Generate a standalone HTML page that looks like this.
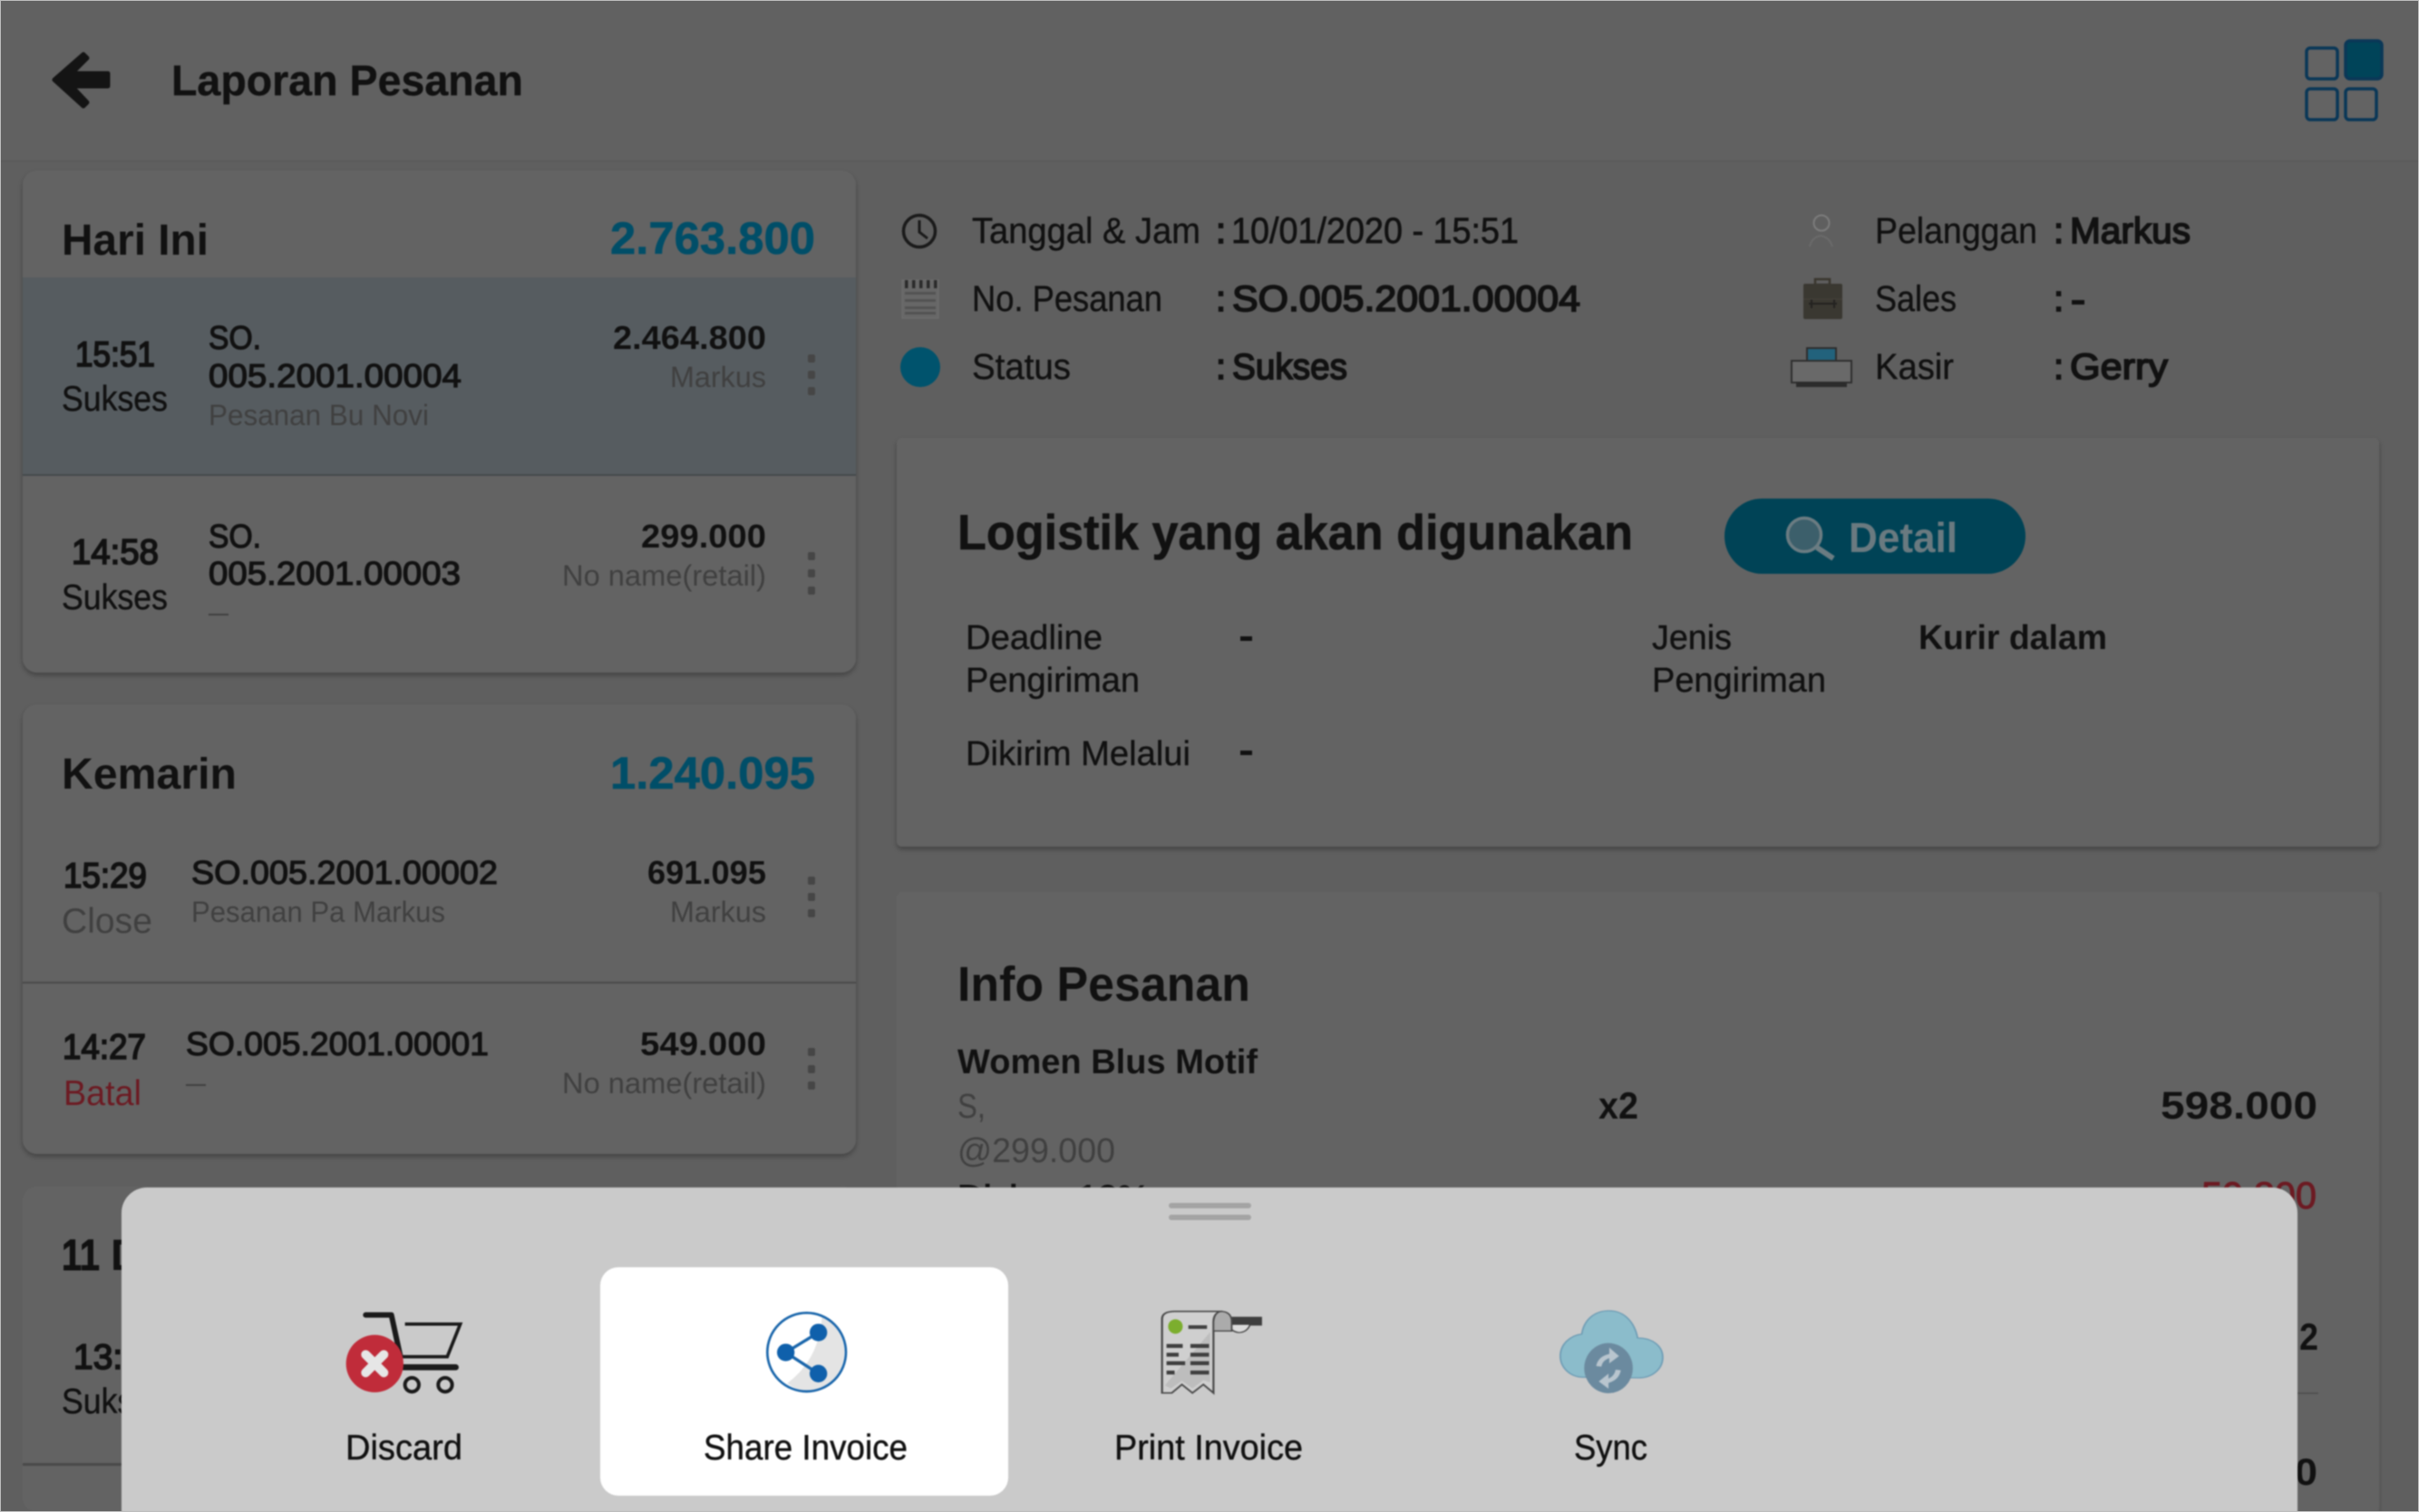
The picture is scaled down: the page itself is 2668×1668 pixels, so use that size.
<!DOCTYPE html>
<html lang="id">
<head>
<meta charset="utf-8">
<title>Laporan Pesanan</title>
<style>
html,body{margin:0;padding:0;background:#5f5f5f;width:2668px;height:1668px;overflow:hidden}
svg{display:block;position:absolute;left:0;top:0}
text{font-family:"Liberation Sans",sans-serif;fill:#111;white-space:pre}
.n{stroke:#111;stroke-width:.4px}
.m{stroke:#111;stroke-width:1.2px}
.h{stroke:#111;stroke-width:1.7px}
.b{font-weight:700}
.g{fill:#404040}
.tm{fill:#004e68;stroke:#004e68;stroke-width:.6px}
.r{fill:#6c1a22}
.soft{filter:blur(.7px)}
</style>
</head>
<body>
<svg width="2668" height="1668" viewBox="0 0 2668 1668" xmlns="http://www.w3.org/2000/svg">
<defs>
<filter id="sh" x="-5%" y="-5%" width="110%" height="110%"><feDropShadow dx="0" dy="3" stdDeviation="3" flood-color="#000" flood-opacity=".3"/></filter>
</defs>
<g class="soft">
<rect width="2668" height="1668" fill="#5f5f5f"/>
<rect width="2668" height="178" fill="#616161"/>
<rect y="177" width="2668" height="2" fill="#5a5a5a"/>

<!-- back arrow -->
<path d="M60 88 L92 60 L96 64 L79 81 H119 V95 L79 95 L96 113 L92 117 Z" fill="#141414" stroke="#141414" stroke-width="5" stroke-linejoin="round"/>
<text x="189" y="105" font-size="47" class="m b" textLength="388" lengthAdjust="spacingAndGlyphs" style="stroke-width:.4px">Laporan Pesanan</text>

<!-- grid icon -->
<g fill="none" stroke="#0a3757" stroke-width="3.5">
<rect x="2544" y="53" width="34" height="34" rx="4" fill="#636363"/>
<rect x="2544" y="98" width="34" height="34" rx="4" fill="#636363"/>
<rect x="2587" y="98" width="34" height="34" rx="4" fill="#636363"/>
<rect x="2587" y="45" width="40" height="42" rx="5" fill="#004459"/>
</g>

<!-- left card 1 -->
<rect x="25" y="188" width="919" height="554" rx="16" fill="#636363" filter="url(#sh)"/>
<text x="68" y="281" font-size="48" class="b" textLength="162" lengthAdjust="spacingAndGlyphs">Hari Ini</text>
<text x="673" y="280" font-size="50" class="tm b" textLength="226" lengthAdjust="spacingAndGlyphs">2.763.800</text>
<rect x="25" y="306" width="919" height="217" fill="#565c60"/>
<rect x="25" y="523" width="919" height="2" fill="#454a4c"/>

<text x="83" y="404" font-size="39" class="h" textLength="88" lengthAdjust="spacingAndGlyphs">15:51</text>
<text x="68" y="453" font-size="39" class="n" textLength="117" lengthAdjust="spacingAndGlyphs">Sukses</text>
<text x="230" y="385" font-size="36" class="m" textLength="58" lengthAdjust="spacingAndGlyphs">SO.</text>
<text x="230" y="427" font-size="36" class="m" textLength="279" lengthAdjust="spacingAndGlyphs">005.2001.00004</text>
<text x="230" y="469" font-size="32" class="g" textLength="243" lengthAdjust="spacingAndGlyphs">Pesanan Bu Novi</text>
<text x="676" y="385" font-size="36" class="b" textLength="169" lengthAdjust="spacingAndGlyphs">2.464.800</text>
<text x="739" y="427" font-size="32" class="g" textLength="106" lengthAdjust="spacingAndGlyphs">Markus</text>
<g fill="#464646"><rect x="891" y="391" width="8" height="9" rx="2"/><rect x="891" y="409" width="8" height="9" rx="2"/><rect x="891" y="427" width="8" height="9" rx="2"/></g>

<text x="79" y="622" font-size="39" class="h" textLength="96" lengthAdjust="spacingAndGlyphs">14:58</text>
<text x="68" y="672" font-size="39" class="n" textLength="117" lengthAdjust="spacingAndGlyphs">Sukses</text>
<text x="230" y="604" font-size="36" class="m" textLength="58" lengthAdjust="spacingAndGlyphs">SO.</text>
<text x="230" y="645" font-size="36" class="m" textLength="278" lengthAdjust="spacingAndGlyphs">005.2001.00003</text>
<rect x="230" y="677" width="22" height="2" fill="#404040"/>
<text x="707" y="604" font-size="36" class="b" textLength="138" lengthAdjust="spacingAndGlyphs">299.000</text>
<text x="620" y="646" font-size="32" class="g" textLength="225" lengthAdjust="spacingAndGlyphs">No name(retail)</text>
<g fill="#464646"><rect x="891" y="609" width="8" height="9" rx="2"/><rect x="891" y="628" width="8" height="9" rx="2"/><rect x="891" y="647" width="8" height="9" rx="2"/></g>

<!-- left card 2 -->
<rect x="25" y="777" width="919" height="496" rx="16" fill="#636363" filter="url(#sh)"/>
<text x="68" y="870" font-size="48" class="b" textLength="193" lengthAdjust="spacingAndGlyphs">Kemarin</text>
<text x="673" y="870" font-size="50" class="tm b" textLength="226" lengthAdjust="spacingAndGlyphs">1.240.095</text>
<text x="70" y="979" font-size="39" class="h" textLength="92" lengthAdjust="spacingAndGlyphs">15:29</text>
<text x="68" y="1029" font-size="39" class="g" textLength="100" lengthAdjust="spacingAndGlyphs">Close</text>
<text x="211" y="975" font-size="36" class="m" textLength="338" lengthAdjust="spacingAndGlyphs">SO.005.2001.00002</text>
<text x="211" y="1017" font-size="32" class="g" textLength="280" lengthAdjust="spacingAndGlyphs">Pesanan Pa Markus</text>
<text x="714" y="975" font-size="36" class="b" textLength="131" lengthAdjust="spacingAndGlyphs">691.095</text>
<text x="739" y="1017" font-size="32" class="g" textLength="106" lengthAdjust="spacingAndGlyphs">Markus</text>
<g fill="#464646"><rect x="891" y="967" width="8" height="9" rx="2"/><rect x="891" y="985" width="8" height="9" rx="2"/><rect x="891" y="1003" width="8" height="9" rx="2"/></g>
<rect x="25" y="1083" width="919" height="2" fill="#4a4a4a"/>
<text x="69" y="1168" font-size="39" class="h" textLength="92" lengthAdjust="spacingAndGlyphs">14:27</text>
<text x="70" y="1219" font-size="39" class="r" textLength="86" lengthAdjust="spacingAndGlyphs">Batal</text>
<text x="205" y="1164" font-size="36" class="m" textLength="334" lengthAdjust="spacingAndGlyphs">SO.005.2001.00001</text>
<rect x="205" y="1196" width="22" height="2" fill="#404040"/>
<text x="706" y="1164" font-size="36" class="b" textLength="139" lengthAdjust="spacingAndGlyphs">549.000</text>
<text x="620" y="1206" font-size="32" class="g" textLength="225" lengthAdjust="spacingAndGlyphs">No name(retail)</text>
<g fill="#464646"><rect x="891" y="1156" width="8" height="9" rx="2"/><rect x="891" y="1175" width="8" height="9" rx="2"/><rect x="891" y="1193" width="8" height="9" rx="2"/></g>

<!-- left card 3 -->
<rect x="25" y="1309" width="919" height="359" rx="16" fill="#636363"/>
<text x="68" y="1401" font-size="48" class="b" textLength="42" lengthAdjust="spacingAndGlyphs" style="stroke:#111;stroke-width:1px">11</text>
<text x="122" y="1401" font-size="48" class="b">Desember</text>
<text x="81" y="1510" font-size="39" class="h">13:05</text>
<text x="68" y="1559" font-size="39" class="n" textLength="117" lengthAdjust="spacingAndGlyphs">Sukses</text>
<rect x="25" y="1614" width="919" height="3" fill="#4a4a4a"/>

<!-- top info -->
<circle cx="1014" cy="255" r="17.5" fill="none" stroke="#1a1a1a" stroke-width="3.5"/>
<path d="M1014 243 V256 L1023 263" fill="none" stroke="#1a1a1a" stroke-width="3"/>
<text x="1072" y="268" font-size="40" class="n" textLength="252" lengthAdjust="spacingAndGlyphs">Tanggal &amp; Jam</text>
<text x="1341" y="268" font-size="40" class="h">:</text>
<text x="1358" y="268" font-size="40" class="n" style="stroke-width:.7px" textLength="317" lengthAdjust="spacingAndGlyphs">10/01/2020 - 15:51</text>

<rect x="995" y="309" width="40" height="42" fill="#676767" stroke="#6c6c6c" stroke-width="1.5"/>
<g fill="#2b2b2b"><rect x="998" y="309" width="3.5" height="9"/><rect x="1006" y="309" width="3.5" height="9"/><rect x="1014" y="309" width="3.5" height="9"/><rect x="1022" y="309" width="3.5" height="9"/><rect x="1030" y="309" width="3.5" height="9"/></g>
<g fill="#525252"><rect x="998" y="322" width="34" height="3"/><rect x="998" y="330" width="34" height="3"/><rect x="998" y="338" width="34" height="3"/><rect x="998" y="344" width="34" height="3"/></g>
<text x="1072" y="343" font-size="40" class="n" textLength="210" lengthAdjust="spacingAndGlyphs">No. Pesanan</text>
<text x="1341" y="343" font-size="40" class="h">:</text>
<text x="1359" y="343" font-size="40" class="h" textLength="384" lengthAdjust="spacingAndGlyphs">SO.005.2001.00004</text>

<circle cx="1015" cy="405" r="22" fill="#00536d"/>
<text x="1072" y="418" font-size="40" class="n" textLength="109" lengthAdjust="spacingAndGlyphs">Status</text>
<text x="1341" y="418" font-size="40" class="h">:</text>
<text x="1359" y="418" font-size="40" class="h" textLength="127" lengthAdjust="spacingAndGlyphs">Sukses</text>

<circle cx="2009" cy="246" r="8.5" fill="none" stroke="#7c7c7c" stroke-width="2"/>
<path d="M1996 272 Q1998 262 2008 260 Q2018 262 2021 272" fill="none" stroke="#6a6a6a" stroke-width="2"/>
<text x="2068" y="268" font-size="40" class="n" textLength="179" lengthAdjust="spacingAndGlyphs">Pelanggan</text>
<text x="2265" y="268" font-size="40" class="h">:</text>
<text x="2283" y="268" font-size="40" class="h" textLength="133" lengthAdjust="spacingAndGlyphs">Markus</text>

<rect x="2002" y="308" width="16" height="6" fill="none" stroke="#3a362e" stroke-width="2.5"/>
<rect x="1989" y="313" width="43" height="39" rx="2" fill="#3a3831"/>
<path d="M1995 335 H2026 M1998 330 V340 M2023 330 V340" stroke="#232220" stroke-width="2" fill="none"/>
<path d="M1989 330 L2032 330" stroke="#46433b" stroke-width="1"/>
<text x="2068" y="343" font-size="40" class="n" textLength="90" lengthAdjust="spacingAndGlyphs">Sales</text>
<text x="2265" y="343" font-size="40" class="h">:</text>
<rect x="2285" y="331" width="14" height="5" fill="#111"/>

<rect x="1993" y="384" width="32" height="16" fill="#22627c" stroke="#2d2d2d" stroke-width="2"/>
<rect x="1976" y="398" width="66" height="24" fill="#696969" stroke="#2f2f2f" stroke-width="2"/>
<rect x="1981" y="421" width="56" height="6" fill="#2c2c2c"/>
<text x="2068" y="418" font-size="40" class="n" textLength="87" lengthAdjust="spacingAndGlyphs">Kasir</text>
<text x="2265" y="418" font-size="40" class="h">:</text>
<text x="2283" y="418" font-size="40" class="h" textLength="108" lengthAdjust="spacingAndGlyphs">Gerry</text>

<!-- logistik card -->
<rect x="989" y="483" width="1635" height="451" rx="6" fill="#636363" filter="url(#sh)"/>
<text x="1056" y="606" font-size="55" class="b" textLength="745" lengthAdjust="spacingAndGlyphs" style="stroke:#111;stroke-width:.6px">Logistik yang akan digunakan</text>
<rect x="1902" y="550" width="332" height="83" rx="41.5" fill="#004356"/>
<circle cx="1990" cy="590" r="18.5" fill="#3c5f6b" stroke="#6b7c82" stroke-width="3.5"/>
<path d="M2004 604 L2022 616" stroke="#6b7c82" stroke-width="6"/>
<text x="2039" y="609" font-size="46" class="b" style="fill:#6a7a80" textLength="120" lengthAdjust="spacingAndGlyphs">Detail</text>

<text x="1065" y="716" font-size="38" class="n" textLength="151" lengthAdjust="spacingAndGlyphs">Deadline</text>
<text x="1065" y="763" font-size="38" class="n" textLength="192" lengthAdjust="spacingAndGlyphs">Pengiriman</text>
<rect x="1368" y="702" width="13" height="5" fill="#111"/>
<text x="1822" y="716" font-size="38" class="n" textLength="88" lengthAdjust="spacingAndGlyphs">Jenis</text>
<text x="1822" y="763" font-size="38" class="n" textLength="192" lengthAdjust="spacingAndGlyphs">Pengiriman</text>
<text x="2116" y="716" font-size="38" class="b" textLength="208" lengthAdjust="spacingAndGlyphs">Kurir dalam</text>
<text x="1065" y="844" font-size="38" class="n" textLength="248" lengthAdjust="spacingAndGlyphs">Dikirim Melalui</text>
<rect x="1368" y="828" width="13" height="5" fill="#111"/>

<!-- info card -->
<rect x="989" y="984" width="1635" height="684" rx="6" fill="#636363"/>
<rect x="2624" y="984" width="3" height="684" fill="#595959"/>
<text x="1056" y="1104" font-size="54" class="b" textLength="323" lengthAdjust="spacingAndGlyphs">Info Pesanan</text>
<text x="1056" y="1184" font-size="38" class="b" textLength="331" lengthAdjust="spacingAndGlyphs">Women Blus Motif</text>
<text x="1056" y="1233" font-size="38" class="g" textLength="31" lengthAdjust="spacingAndGlyphs">S,</text>
<text x="1056" y="1282" font-size="38" class="g" textLength="174" lengthAdjust="spacingAndGlyphs">@299.000</text>
<text x="1056" y="1334" font-size="38" class="m" textLength="212" lengthAdjust="spacingAndGlyphs">Diskon 10%</text>
<text x="1763" y="1234" font-size="42" class="b" textLength="44" lengthAdjust="spacingAndGlyphs">x2</text>
<text x="2383" y="1234" font-size="43" class="b" textLength="173" lengthAdjust="spacingAndGlyphs">598.000</text>
<text x="2428" y="1333" font-size="42" class="r" stroke="#6c1a22" stroke-width="1" textLength="127" lengthAdjust="spacingAndGlyphs">59.800</text>
<text x="2536" y="1489" font-size="42" class="b" textLength="21" lengthAdjust="spacingAndGlyphs">2</text>
<rect x="2400" y="1536" width="157" height="2" fill="#525252"/>
<text x="2531" y="1638" font-size="42" class="b" textLength="25" lengthAdjust="spacingAndGlyphs">0</text>
</g>

<!-- bottom sheet -->
<g class="soft">
<path d="M134 1668 V1338 A28 28 0 0 1 162 1310 H2506 A28 28 0 0 1 2534 1338 V1668 Z" fill="#cacaca"/>
<rect x="1289" y="1327" width="91" height="6" rx="3" fill="#a4a4a4"/>
<rect x="1289" y="1340" width="91" height="6" rx="3" fill="#a4a4a4"/>
<rect x="662" y="1398" width="450" height="252" rx="20" fill="#ffffff"/>

<!-- cart icon -->
<g transform="translate(340 1390) scale(.3333)">
<path d="M190 182 H275 L305 320" fill="none" stroke="#1a1a1a" stroke-width="18" stroke-linecap="round" stroke-linejoin="round"/>
<path d="M320 212 H503 L460 320 H305" fill="none" stroke="#1a1a1a" stroke-width="11"/>
<path d="M310 355 H488" fill="none" stroke="#1a1a1a" stroke-width="20" stroke-linecap="round"/>
<circle cx="343" cy="413" r="23" fill="none" stroke="#1a1a1a" stroke-width="12"/>
<circle cx="453" cy="413" r="23" fill="none" stroke="#1a1a1a" stroke-width="12"/>
<circle cx="220" cy="343" r="95" fill="#c02c3a"/>
<path d="M190 313 L250 373 M250 313 L190 373" stroke="#e6e6e6" stroke-width="30" stroke-linecap="round"/>
</g>

<!-- share icon -->
<g transform="translate(740 1390) scale(.3333)">
<path d="M500 188 Q490 330 385 408 A130 130 0 0 0 449 435 A130 130 0 0 0 500 188 Z" fill="#e4e4e4"/>
<circle cx="449" cy="305" r="130" fill="none" stroke="#1a66ab" stroke-width="8"/>
<path d="M488 240 L380 306 L488 376" fill="none" stroke="#1a66ab" stroke-width="10"/>
<circle cx="488" cy="240" r="29" fill="#0f60ab"/>
<circle cx="380" cy="306" r="29" fill="#0f60ab"/>
<circle cx="488" cy="376" r="29" fill="#0f60ab"/>
</g>

<!-- receipt icon -->
<g transform="translate(1200 1390) scale(.4464 .3333)">
<path d="M340 190 H428 V215 H400 Q392 240 372 240 Q352 236 350 215 H340 Z" fill="#d6d6d6" stroke="#444" stroke-width="4"/>
<rect x="355" y="190" width="73" height="25" rx="3" fill="#3e3e3e"/>
<path d="M358 215 H398 Q392 236 374 238 Q358 232 358 215Z" fill="#dcdcdc"/>
<path d="M183 440 V195 Q183 170 215 170 H325 Q310 180 310 205 V440 L285 412 L258 440 L232 412 L207 440 Z" fill="#cfcfcf" stroke="#4a4a4a" stroke-width="5"/>
<path d="M302 238 V405 L285 398 L258 425 L232 400 L205 425 L190 415 Z" fill="#bdbdbd"/>
<path d="M310 235 V205 Q312 172 330 170 Q355 172 355 205 V235 Z" fill="#ababab" stroke="#4a4a4a" stroke-width="4"/>
<ellipse cx="216" cy="220" rx="18" ry="24" fill="#7cae2e"/>
<g fill="#3f3f3f">
<rect x="248" y="216" width="46" height="12"/>
<rect x="194" y="278" width="40" height="13"/><rect x="253" y="278" width="46" height="13"/>
<rect x="194" y="307" width="30" height="13"/><rect x="253" y="307" width="46" height="13"/>
<rect x="194" y="335" width="46" height="13"/><rect x="253" y="335" width="46" height="13"/>
<rect x="194" y="366" width="20" height="13"/><rect x="253" y="366" width="46" height="13"/>
</g>
</g>

<!-- sync icon -->
<g transform="translate(1200 1390) scale(.4464 .3333)">
<path d="M1225 388 C1190 388 1167 355 1167 318 C1167 280 1190 250 1220 245 C1225 200 1250 168 1287 168 C1325 168 1350 205 1358 258 C1395 258 1420 285 1420 322 C1420 360 1395 390 1360 390 Z" fill="#8bbccb" stroke="#6f9db5" stroke-width="4"/>
<ellipse cx="1286" cy="358" rx="60" ry="83" fill="#6b8a9f"/>
<path d="M1262 352 Q1266 322 1294 316" fill="none" stroke="#b8c5ce" stroke-width="13"/>
<path d="M1310 364 Q1306 394 1280 402" fill="none" stroke="#b8c5ce" stroke-width="13"/>
<path d="M1288 290 L1312 318 L1288 342 Z" fill="#b8c5ce"/>
<path d="M1286 376 L1262 402 L1286 426 Z" fill="#b8c5ce"/>
</g>

<text x="381" y="1610" font-size="39" class="n" textLength="129" lengthAdjust="spacingAndGlyphs">Discard</text>
<text x="776" y="1610" font-size="39" class="n" textLength="225" lengthAdjust="spacingAndGlyphs">Share Invoice</text>
<text x="1229" y="1610" font-size="39" class="n" textLength="208" lengthAdjust="spacingAndGlyphs">Print Invoice</text>
<text x="1736" y="1610" font-size="39" class="n" textLength="81" lengthAdjust="spacingAndGlyphs">Sync</text>
</g>

<rect x=".5" y=".5" width="2667" height="1667" fill="none" stroke="#bdbdbd" stroke-width="1"/>
</svg>
</body>
</html>
